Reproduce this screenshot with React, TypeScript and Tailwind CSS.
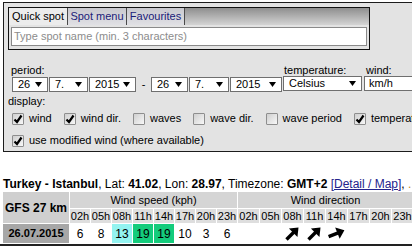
import React from "react";

const Arrow = () => (
  <svg width="7" height="5" viewBox="0 0 7 5" className="shrink-0">
    <polygon points="0,0 7,0 3.5,5" fill="#000" />
  </svg>
);

const Select = ({ value, className }: { value: string; className: string }) => (
  <div
    className={`h-[15px] flex items-center justify-between bg-white border border-[#6f6f6f] pl-[5px] pr-[5px] ${className}`}
  >
    <span className="leading-[13px]">{value}</span>
    <Arrow />
  </div>
);

const Check = ({ checked, label, className = "" }: { checked?: boolean; label: string; className?: string }) => (
  <div className={`flex items-center gap-[5px] ${className}`}>
    <span className="w-[12px] h-[12px] rounded-[1px] border border-[#8e8e8e] bg-linear-to-br from-[#cfcfcf] to-[#f8f8f8] flex items-center justify-center shrink-0">
      {checked && (
        <svg width="10" height="10" viewBox="0 0 10 10">
          <path d="M1.5 5.5 L4 8 L8.5 1.5" stroke="#000" strokeWidth="2.2" fill="none" />
        </svg>
      )}
    </span>
    <span className="leading-[13px] whitespace-nowrap">{label}</span>
  </div>
);

const DirArrow = ({ rot }: { rot: string }) => (
  <svg width="19" height="19" viewBox="0 0 19 19" className={rot}>
    <line x1="1" y1="9.5" x2="12" y2="9.5" stroke="#000" strokeWidth="3.4" />
    <polygon points="10.5,3.5 18,9.5 10.5,15.5" fill="#000" />
  </svg>
);

const hours = ["02h", "05h", "08h", "11h", "14h", "17h", "20h", "23h"];
const speeds: { v: string; bg: string }[] = [
  { v: "6", bg: "" },
  { v: "8", bg: "" },
  { v: "13", bg: "bg-[#93f3f0]" },
  { v: "19", bg: "bg-[#14cc7c]" },
  { v: "19", bg: "bg-[#14cc7c]" },
  { v: "10", bg: "" },
  { v: "3", bg: "" },
  { v: "6", bg: "" },
];
const dirs = ["", "", "-rotate-45", "-rotate-45", "-rotate-[22deg]", "", "", ""];

export default function App() {
  return (
    <div className="w-[412px] h-[248px] overflow-hidden bg-white text-black font-['Liberation_Sans',Arial,sans-serif] text-[11px]">
      {/* search / settings panel */}
      <div className="mt-[2px] ml-[3px] h-[150px] border-t border-l border-b border-[#1c1c1c] bg-[#e3e3e3] pt-[4px]">
        <div className="ml-[4px] w-[362px] h-[43px] border border-[#111] bg-[#e3e3e3]">
          <div className="flex h-[17px] bg-linear-to-b from-[#8f8f8f] to-[#d4d4d4]">
            <div className="w-[59px] bg-[#ececec] flex items-center justify-center border-r border-[#4a4a4a]">Quick spot</div>
            <div className="w-[59px] bg-linear-to-b from-[#c9c9cf] to-[#e0e0e4] text-[#1b1b78] flex items-center justify-center border-r border-[#4a4a4a]">
              Spot menu
            </div>
            <div className="w-[58px] bg-linear-to-b from-[#c9c9cf] to-[#e0e0e4] text-[#1b1b78] flex items-center justify-center border-r border-[#4a4a4a]">
              Favourites
            </div>
          </div>
          <div className="mt-[2px] ml-[2px] w-[356px] h-[19px] bg-white border border-[#8a8a8a] pl-[2px] flex items-center text-[#8c8c8c]">
            Type spot name (min. 3 characters)
          </div>
        </div>

        <div className="mt-[14px] ml-[7px] flex">
          <div>
            <div className="h-[12px] leading-[12px]">period:</div>
            <div className="flex items-center pl-[1px]">
              <Select value="26" className="w-[36px]" />
              <Select value="7." className="w-[39px] ml-[1px]" />
              <Select value="2015" className="w-[47px] ml-[1px]" />
              <span className="w-[15px] text-center">-</span>
              <Select value="26" className="w-[37px]" />
              <Select value="7." className="w-[40px] ml-[1px]" />
              <Select value="2015" className="w-[52px] ml-[1px]" />
            </div>
          </div>
          <div className="ml-[1px]">
            <div className="h-[12px] leading-[12px] pl-[1px]">temperature:</div>
            <Select value="Celsius" className="w-[79px]" />
          </div>
          <div className="ml-[2px]">
            <div className="h-[12px] leading-[12px] pl-[2px]">wind:</div>
            <div className="w-[60px] h-[15px] bg-white border border-[#6f6f6f] pl-[4px] flex items-center">km/h</div>
          </div>
        </div>

        <div className="mt-[2px] ml-[4px] h-[13px] leading-[13px]">display:</div>
        <div className="mt-[4px] ml-[8px] flex h-[14px]">
          <Check checked label="wind" className="mr-[12px]" />
          <Check checked label="wind dir." className="mr-[12px]" />
          <Check label="waves" className="mr-[12px]" />
          <Check label="wave dir." className="mr-[12px]" />
          <Check label="wave period" className="mr-[12px]" />
          <Check checked label="temperature" />
        </div>
        <div className="mt-[8px] ml-[8px] flex h-[14px]">
          <Check checked label="use modified wind (where available)" />
        </div>
      </div>

      {/* forecast */}
      <div className="mt-[25px] ml-[3px] h-[15px] leading-[15px] text-[12px] whitespace-nowrap">
        <b>Turkey - Istanbul</b>, Lat: <b>41.02</b>, Lon: <b>28.97</b>, Timezone: <b>GMT+2</b>{" "}
        <span className="text-[#23238c] underline">[Detail / Map]</span>,{" "}
        <span className="text-[#c98a1a]">.</span>
      </div>
      <div className="ml-[3px] grid grid-cols-[66px_repeat(8,20px)_repeat(8,21px)] grid-rows-[16px_14px_19px] gap-[1px] text-[11px]">
        <div className="row-span-2 bg-[#cfcfcf] font-bold text-[12px] flex items-center justify-center">GFS 27 km</div>
        <div className="col-span-8 bg-[#d5d5d5] flex items-center justify-center">Wind speed (kph)</div>
        <div className="col-span-8 bg-[#d5d5d5] flex items-center justify-center">Wind direction</div>
        {hours.map((h) => (
          <div key={"s" + h} className="bg-[#dedede] flex items-center justify-center">
            {h}
          </div>
        ))}
        {hours.map((h) => (
          <div key={"d" + h} className="bg-[#dedede] flex items-center justify-center">
            {h}
          </div>
        ))}
        <div className="bg-[#a7a7a7] font-bold flex items-center justify-center">26.07.2015</div>
        {speeds.map((s, i) => (
          <div key={"v" + i} className={`${s.bg} flex items-center justify-center text-[12px]`}>
            {s.v}
          </div>
        ))}
        {dirs.map((r, i) => (
          <div key={"a" + i} className="flex items-center justify-center">
            {r && <DirArrow rot={r} />}
          </div>
        ))}
      </div>
      <div className="mt-[1px] h-[2px] bg-[#222]" />
    </div>
  );
}
